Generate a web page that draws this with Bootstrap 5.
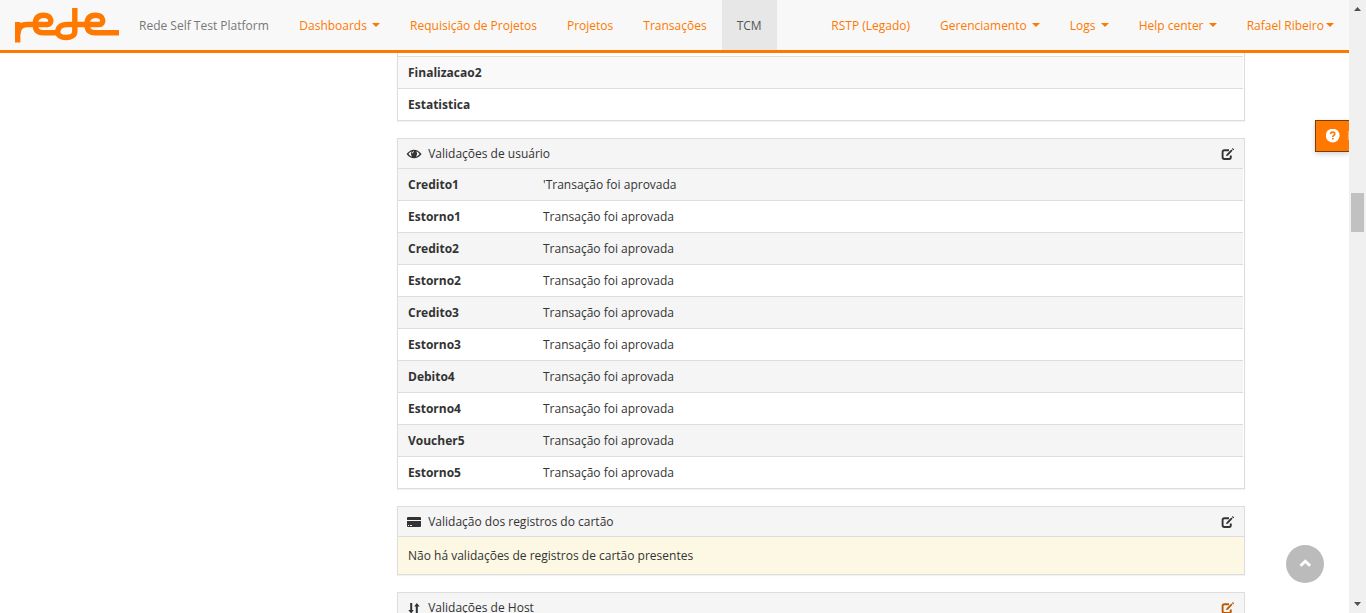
<!DOCTYPE html>
<html lang="pt-BR">
<head>
<meta charset="utf-8">
<meta name="viewport" content="width=device-width, initial-scale=1">
<title>Rede Self Test Platform</title>
<link href="https://cdn.jsdelivr.net/npm/bootstrap@5.3.0/dist/css/bootstrap.min.css" rel="stylesheet">
<style>
:root{--rede:#ff7800}
body{font:12px/18px "Open Sans",sans-serif;color:#333;height:613px;background:#fff}
.topbar{height:53px;background:#f8f8f8;border-bottom:3px solid var(--rede)}
.topbar .nav-link,.brand-text{padding:17px 15px 15px;line-height:18px;font-size:12px;color:var(--rede);white-space:nowrap}
.topbar .brand-text{color:#777;padding-left:20px;padding-right:15.5px}
.topbar .nav-link.active{background:#e7e7e7;color:#555}
.caret{display:inline-block;border:4px solid transparent;border-top-color:currentColor;border-bottom:0;vertical-align:middle;margin:0 0 3px 2px}
.logo{width:119px;height:50px}
.view{width:1349px}
.panels{width:848px;margin-left:397px}
.panel{border:1px solid #ddd;box-shadow:0 1px 1px rgba(0,0,0,.05);margin-bottom:17px;background:#fff}
.panel-head{height:29px;padding:1px 10px 0 9px;background:#f5f5f5}
.panel-head svg{width:14px;height:14px;flex:none}
.panel-head span{margin-left:7.2px}
.rows{width:845px;margin:0;color:#333;border:0;border-collapse:separate;border-spacing:0}
.rows td,.rows th{height:32px;padding:7px 10px 6px;border:0;border-top:1px solid #ddd;color:#333;background:transparent;vertical-align:top;line-height:18px}
.rows th{width:135px;font-weight:700}
.rows tr:nth-child(odd){background:#f5f5f5}
.rows.plain tr:nth-child(odd){background:#f9f9f9}
.first{border-top:0}
.first .rows{margin-top:3px}
.empty-note{height:38px;border-top:1px solid #ddd;background:#fcf8e3;padding:10px 10px 9px}
.help-tab{position:absolute;left:1315px;top:120px;width:34px;height:32px;background:var(--rede);border:1px solid #7d3c05;border-right:0;box-shadow:0 2px 5px rgba(0,0,0,.18);color:#fff;overflow:hidden}
.help-tab svg{width:14px;height:14px;margin:8px 7px 0 10px;flex:none}
.help-tab span{opacity:.5;margin-top:6px}
.to-top{position:absolute;left:1286px;top:545px;width:38px;height:38px;background:#bbb}
.scroll-track{width:17px;background:#f0f0f0}
.scroll-thumb{width:13px;height:39px;background:#c1c1c1;margin-top:183px}
</style>
</head>
<body class="d-flex overflow-hidden">
<svg width="0" height="0" class="position-absolute">
<symbol id="edit" viewBox="0 0 14 14" overflow="visible"><path d="M9 3.300H4.300Q2.600 3.300 2.600 5v5.300q0 1.700 1.700 1.700h4.900q1.600 0 1.600-1.700V8.500" fill="none" stroke="currentColor" stroke-width="1.900"/><path d="M6 9.300l.6-2.100 4.700-4.600 1.200 1.200L8.100 8.500zM11.900 1.900l.8-.8 1.500 1.300-.9.900z" fill="currentColor"/></symbol>
</svg>
<div class="view position-relative overflow-hidden h-100 flex-shrink-0">
<nav class="topbar d-flex">
  <svg class="logo flex-shrink-0" viewBox="0 0 119 50"><g fill="none" stroke="#ff7800" stroke-width="5.400"><path d="M17.700 22v20.500M18 34C18 27.500 21 24.500 27 24.500H47.500C52.500 24.500 52.500 15.300 43.500 15.300C38 15.300 35.200 18.500 35.200 24.500C35.200 30 38 32.700 43 32.700H57"/><path d="M74.800 8v23.500C74.800 35.500 71 37.500 66 37.500C61 37.500 57.700 35.500 57.700 32C57.700 27.500 61 24.500 67 24.500H99C104.500 24.500 104.500 15.300 95.500 15.300C90 15.300 87 18.500 87 24.500C87 30 90 32.700 95 32.700H119"/></g></svg>
  <a class="brand-text text-decoration-none" href="#">Rede Self Test Platform</a>
  <ul class="nav flex-nowrap flex-grow-1">
    <li><a class="nav-link" href="#">Dashboards <b class="caret"></b></a></li>
    <li><a class="nav-link" href="#">Requisição de Projetos</a></li>
    <li><a class="nav-link" href="#">Projetos</a></li>
    <li><a class="nav-link" href="#">Transações</a></li>
    <li><a class="nav-link active" href="#">TCM</a></li>
  </ul>
  <ul class="nav flex-nowrap">
    <li><a class="nav-link" href="#">RSTP (Legado)</a></li>
    <li><a class="nav-link" href="#">Gerenciamento <b class="caret"></b></a></li>
    <li><a class="nav-link" href="#">Logs <b class="caret"></b></a></li>
    <li><a class="nav-link" href="#">Help center <b class="caret"></b></a></li>
    <li><a class="nav-link" href="#">Rafael Ribeiro<b class="caret"></b></a></li>
  </ul>
</nav>
<main class="panels">
  <section class="panel first d-flow-root pt-0">
    <div class="d-flex"><table class="rows plain"><tbody>
      <tr><th>Finalizacao2</th><td></td></tr>
      <tr><th>Estatistica</th><td></td></tr>
    </tbody></table></div>
  </section>
  <section class="panel">
    <div class="panel-head d-flex align-items-center">
      <svg class="overflow-visible" viewBox="0 0 14 14"><path d="M-.4 7Q3 2.700 7 2.700T14.600 7Q11 11.300 7 11.300T-.4 7z" fill="#333"/><path d="M1.400 7Q3 4.800 4.600 4.300Q3 7 5 9.700Q3 9 1.400 7zM12.600 7Q11 4.800 9.400 4.300Q11 7 9 9.700Q11 9 12.600 7z" fill="#f5f5f5"/><path d="M5.400 6.300Q5.400 4.800 6.900 4.500" fill="none" stroke="#f5f5f5" stroke-width="1"/></svg>
      <span>Validações de usuário</span><svg class="ms-auto overflow-visible"><use href="#edit"/></svg>
    </div>
    <table class="rows"><tbody>
      <tr><th>Credito1</th><td>'Transação foi aprovada</td></tr>
      <tr><th>Estorno1</th><td>Transação foi aprovada</td></tr>
      <tr><th>Credito2</th><td>Transação foi aprovada</td></tr>
      <tr><th>Estorno2</th><td>Transação foi aprovada</td></tr>
      <tr><th>Credito3</th><td>Transação foi aprovada</td></tr>
      <tr><th>Estorno3</th><td>Transação foi aprovada</td></tr>
      <tr><th>Debito4</th><td>Transação foi aprovada</td></tr>
      <tr><th>Estorno4</th><td>Transação foi aprovada</td></tr>
      <tr><th>Voucher5</th><td>Transação foi aprovada</td></tr>
      <tr><th>Estorno5</th><td>Transação foi aprovada</td></tr>
    </tbody></table>
  </section>
  <section class="panel">
    <div class="panel-head d-flex align-items-center">
      <svg viewBox="0 0 14 14"><path d="M1 2h12q1 0 1 1v2H0V3q0-1 1-1zM0 6h14v5q0 1-1 1H1q-1 0-1-1z" fill="#333"/><path d="M1 10.500h1M3 10.500h2" stroke="#f5f5f5"/></svg>
      <span>Validação dos registros do cartão</span><svg class="ms-auto overflow-visible"><use href="#edit"/></svg>
    </div>
    <div class="empty-note">Não há validações de registros de cartão presentes</div>
  </section>
  <section class="panel">
    <div class="panel-head d-flex align-items-center">
      <svg viewBox="0 0 14 14"><path d="M3.200 2h2v7h1.600L4.200 12.500 1.300 9h1.900zM8.800 12.500h2v-7h1.900L9.800 2 7.200 5.500h1.600z" fill="#333"/></svg>
      <span>Validações de Host</span><svg class="ms-auto overflow-visible" color="#bd5900"><use href="#edit"/></svg>
    </div>
  </section>
</main>
<a class="help-tab d-flex text-decoration-none" href="#" aria-label="Help">
  <svg viewBox="0 0 14 14"><circle cx="6.700" cy="6.500" r="6.900" fill="#fff"/><path d="M4.600 5Q4.700 3.100 6.700 3.100T8.800 4.800Q8.800 5.800 7.700 6.400Q6.800 6.900 6.800 7.900M6.800 8.900v1.700" fill="none" stroke="#ff7800" stroke-width="1.700"/></svg><span>H</span>
</a>
<a class="to-top rounded-circle d-flex align-items-center justify-content-center" href="#" aria-label="Top"><svg width="14" height="14" viewBox="0 0 14 14"><path d="M2.500 8.800L7.300 4.300l4.800 4.500" fill="none" stroke="#fff" stroke-width="2.900"/></svg></a>
</div>
<div class="scroll-track d-flex flex-column align-items-center flex-shrink-0 h-100">
  <svg width="17" height="10" viewBox="0 0 17 10" class="overflow-visible"><path d="M5 11l3.500-4 3.500 4z" fill="#505050"/></svg>
  <div class="scroll-thumb"></div>
  <svg class="mt-auto" width="17" height="13" viewBox="0 0 17 13"><path d="M5 2h7L8.500 6z" fill="#505050"/></svg>
</div>
<script src="https://cdn.jsdelivr.net/npm/bootstrap@5.3.0/dist/js/bootstrap.bundle.min.js"></script>
</body>
</html>
